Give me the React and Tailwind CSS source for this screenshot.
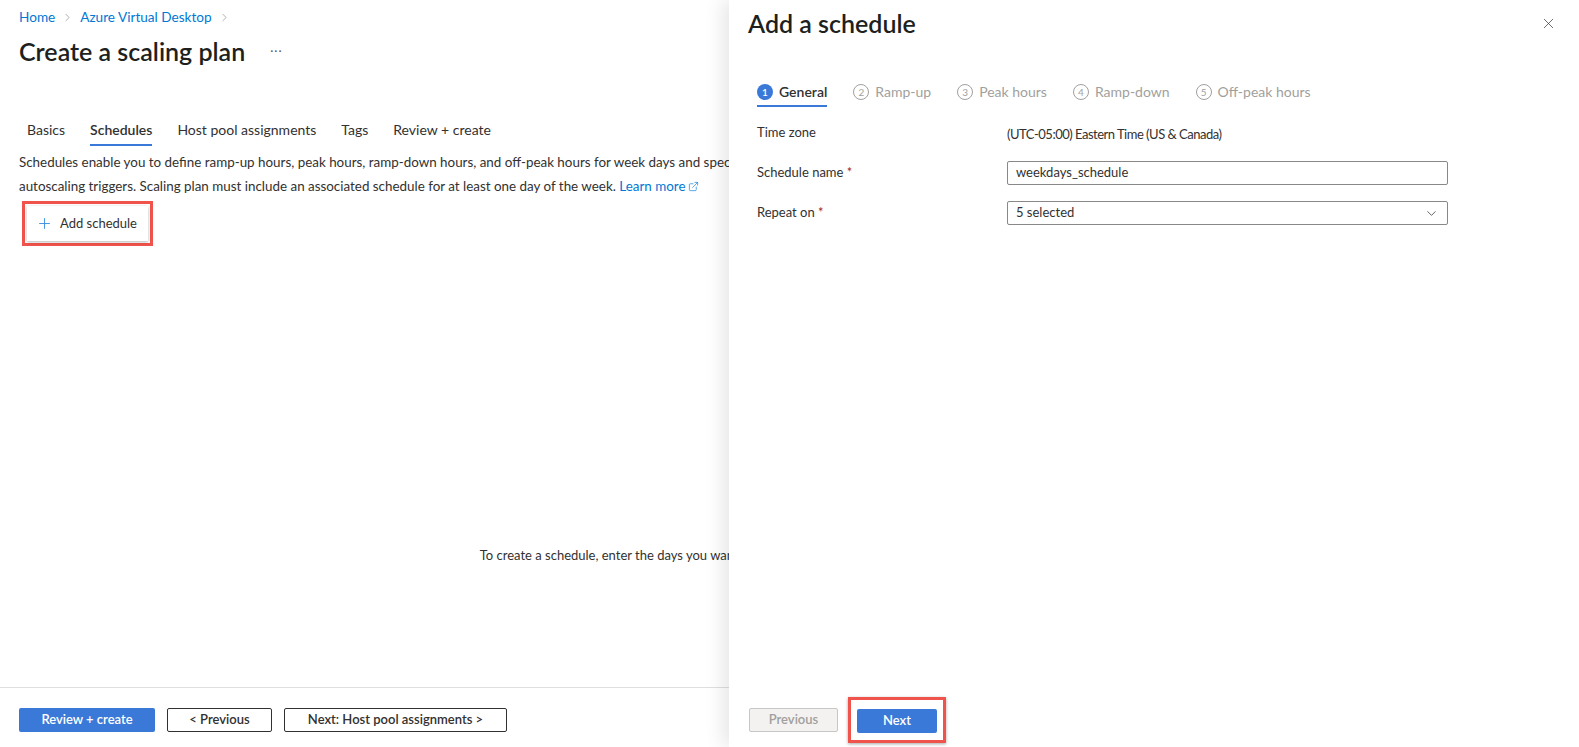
import { ChevronRight, ChevronDown, Plus, X, ExternalLink } from "lucide-react";

const TABS = ["Basics", "Schedules", "Host pool assignments", "Tags", "Review + create"];
const STEPS = ["General", "Ramp-up", "Peak hours", "Ramp-down", "Off-peak hours"];

function StepCircle({ n, active }) {
  return (
    <span className={`w-[16px] h-[16px] rounded-full flex items-center justify-center text-[10px] leading-none ${active ? "bg-[#3a79d7] text-white font-semibold" : "border border-[#a19f9d] text-[#a19f9d]"}`}>
      {n}
    </span>
  );
}

function Field({ label, required, children }) {
  return (
    <div className="flex items-center h-[24px]">
      <div className="w-[250px] text-[13px] text-[#323130]">
        {label}
        {required && <span className="text-[#a4262c]"> *</span>}
      </div>
      <div className="flex-1">{children}</div>
    </div>
  );
}

function SchedulePanel() {
  return (
    <div className="absolute top-0 right-0 h-full w-[850px] bg-white shadow-[-6px_0_18px_rgba(0,0,0,0.10)] flex flex-col">
      <div className="flex items-start justify-between pl-[19px] pr-[22px] pt-[7px]">
        <h2 className="text-[25px] leading-[32px] font-semibold text-[#201f1e]">Add a schedule</h2>
        <X size={17} strokeWidth={1} className="mt-[8px] text-[#323130]" />
      </div>

      <div className="flex items-center gap-[26px] ml-[28px] mt-[40px]">
        {STEPS.map((s, i) => (
          <div key={s} className={`flex items-center gap-[6px] pb-[3px] pt-[3px] border-b-2 ${i === 0 ? "border-[#3a79d7]" : "border-transparent"}`}>
            <StepCircle n={i + 1} active={i === 0} />
            <span className={`text-[14px] leading-[20px] ${i === 0 ? "font-semibold text-[#323130]" : "text-[#a19f9d]"}`}>{s}</span>
          </div>
        ))}
      </div>

      <div className="ml-[28px] mt-[14px] w-[691px] flex flex-col gap-[16px]">
        <Field label="Time zone">
          <span className="text-[13px] text-[#323130] tracking-[-0.5px]">(UTC-05:00) Eastern Time (US &amp; Canada)</span>
        </Field>
        <Field label="Schedule name" required>
          <div className="h-[24px] border border-[#8a8886] rounded-[2px] px-[8px] flex items-center text-[13px] text-[#323130]">
            weekdays_schedule
          </div>
        </Field>
        <Field label="Repeat on" required>
          <div className="h-[24px] border border-[#8a8886] rounded-[2px] pl-[8px] pr-[8px] flex items-center justify-between text-[13px] text-[#323130]">
            <span>5 selected</span>
            <ChevronDown size={15} strokeWidth={1.2} />
          </div>
        </Field>
      </div>

      <div className="mt-auto flex items-center pl-[20px] pb-[4px]">
        <button className="w-[89px] h-[24px] rounded-[2px] bg-[#f3f2f1] border border-[#c8c6c4] text-[13px] font-semibold text-[#a19f9d]">
          Previous
        </button>
        <div className="ml-[10px] border-[3px] border-[#f0534b] p-[7px_6px] shadow-[0_1px_3px_rgba(0,0,0,0.35)]">
          <button className="w-[80px] h-[24px] rounded-[2px] bg-[#3a79d7] text-[13px] font-semibold text-white">
            Next
          </button>
        </div>
      </div>
    </div>
  );
}

export default function App() {
  return (
    <div className="relative w-full h-[747px] overflow-hidden bg-white text-[#323130]" style={{ fontFamily: "Lato, 'Open Sans', sans-serif" }}>
      <div className="h-full flex flex-col">
        <div className="px-[19px] pt-[8px]">
          <div className="flex items-center gap-[6px] text-[13.6px] leading-[18px]">
            <span className="text-[#0078d4]">Home</span>
            <ChevronRight size={13} strokeWidth={1.2} className="text-[#8a8886]" />
            <span className="text-[#0078d4]">Azure Virtual Desktop</span>
            <ChevronRight size={13} strokeWidth={1.2} className="text-[#8a8886]" />
          </div>
          <div className="flex items-center mt-[9px]">
            <h1 className="text-[25px] leading-[32px] font-semibold text-[#201f1e]">Create a scaling plan</h1>
            <span className="ml-[25px] text-[12px] text-[#605e5c] tracking-[1px]">···</span>
          </div>

          <div className="flex items-end gap-[25px] ml-[8px] mt-[53px]">
            {TABS.map((t) => (
              <span key={t} className={`text-[14px] leading-[20px] pb-[4px] border-b-2 ${t === "Schedules" ? "font-semibold border-[#3a79d7]" : "border-transparent"}`}>
                {t}
              </span>
            ))}
          </div>

          <p className="mt-[4px] text-[13.4px] leading-[24px] whitespace-nowrap">
            Schedules enable you to define ramp-up hours, peak hours, ramp-down hours, and off-peak hours for week days and specify
            <br />
            autoscaling triggers. Scaling plan must include an associated schedule for at least one day of the week.{" "}
            <span className="text-[#0078d4] inline-flex items-center gap-[3px]">
              Learn more <ExternalLink size={11} strokeWidth={1.4} />
            </span>
          </p>

          <div className="mt-[3px] ml-[3px] w-[131px] h-[45px] border-[3px] border-[#f0534b] p-[2px]">
            <div className="h-full bg-white shadow-[0_1px_3px_rgba(0,0,0,0.3)] flex items-center pl-[9px] gap-[7px]">
              <Plus size={17} strokeWidth={1.3} className="text-[#3a8ee0]" />
              <span className="text-[13px]">Add schedule</span>
            </div>
          </div>
        </div>

        <div className="flex-1 flex items-center justify-center pt-[178px]">
          <p className="text-[13px]">
            To create a schedule, enter the days you want the schedule to apply to and set the start times for each phase.
          </p>
        </div>

        <div className="border-t border-[#e1dfdd] px-[19px] pt-[20px] pb-[15px] flex items-center gap-[12px]">
          <button className="w-[136px] h-[24px] rounded-[2px] bg-[#3a79d7] text-white text-[13px] font-semibold">Review + create</button>
          <button className="w-[105px] h-[24px] rounded-[2px] border border-[#323130] text-[13px] font-semibold">&lt; Previous</button>
          <button className="w-[223px] h-[24px] rounded-[2px] border border-[#323130] text-[13px] font-semibold">Next: Host pool assignments &gt;</button>
        </div>
      </div>

      <SchedulePanel />
    </div>
  );
}
